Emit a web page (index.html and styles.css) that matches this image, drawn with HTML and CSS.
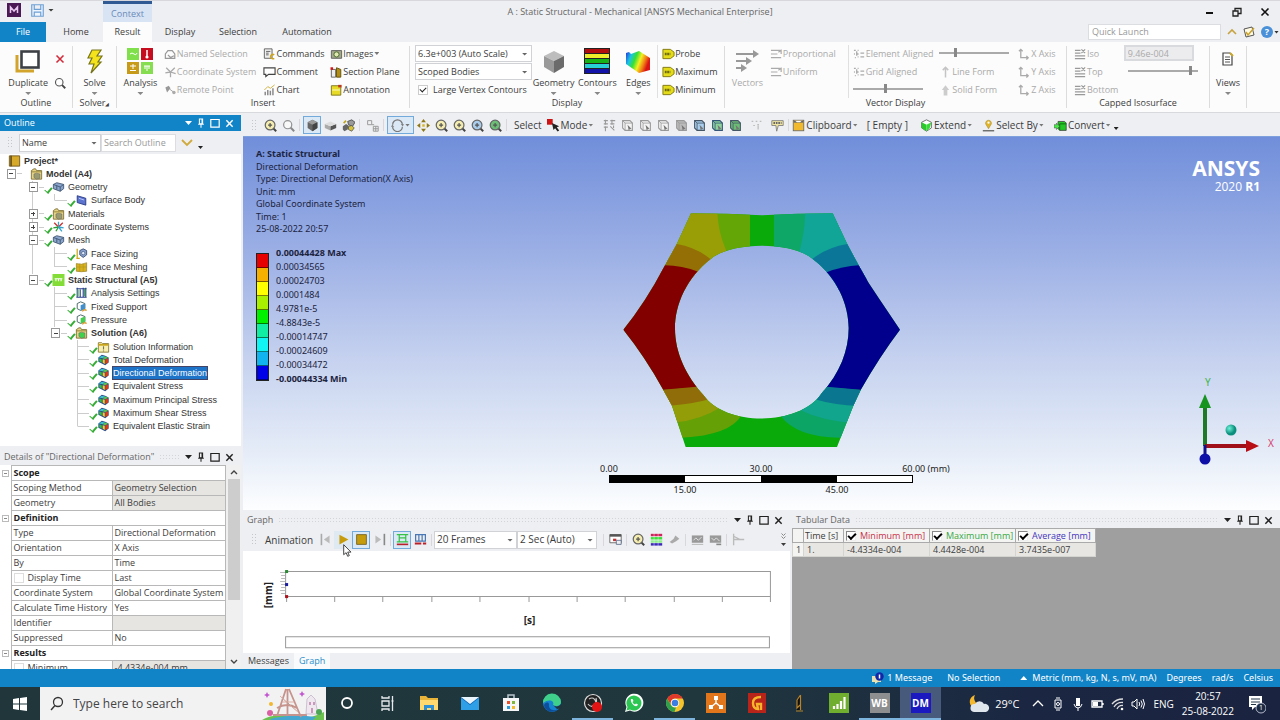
FILE: index.html
```html
<!DOCTYPE html>
<html lang="en">
<head>
<meta charset="utf-8">
<title>A : Static Structural - Mechanical</title>
<link rel="stylesheet" href="styles.css">
</head>
<body>
<svg class="sprite" aria-hidden="true">
  <symbol id="i-mag" viewBox="0 0 16 16"><path d="M10.5 10.5L15 15" stroke="#444" stroke-width="2.4"/><circle cx="7" cy="7" r="5" fill="var(--fill,#fff)" stroke="#555" stroke-width="1.5"/></symbol>
  <symbol id="i-magplus" viewBox="0 0 16 16"><path d="M11 11L15 15" stroke="#444" stroke-width="2.4"/><circle cx="7.500" cy="7.500" r="6" fill="var(--fill,#f5ecb0)" stroke="#666" stroke-width="1.5"/><path d="M5 7.500h5M7.500 5v5" stroke="#555" stroke-width="1.500"/></symbol>
  <symbol id="i-cube" viewBox="0 0 16 16"><path d="M8 1l6 3v7l-6 4-6-4V4z" fill="#666"/><path d="M8 1l6 3-6 3-6-3z" fill="#999"/><path d="M8 7l6-3v7l-6 4z" fill="#444"/></symbol>
  <symbol id="i-slab" viewBox="0 0 16 16"><path d="M1 6l7 3v5l-7-3z" fill="#aaa"/><path d="M15 6L8 9v5l7-3z" fill="#555"/><path d="M8 3l7 3-7 3-7-3z" fill="#ddd"/></symbol>
  <symbol id="i-cyls" viewBox="0 0 16 16"><path d="M1 9l4-3 3 2-1 5-4 2-2-2z" fill="#666"/><path d="M7 3l5-2 4 3-3 5-5-2z" fill="#999" stroke="#444"/><path d="M8 9l4-1 3 3-3 4-4-2z" fill="#d6c238" stroke="#555"/><path d="M2 5l3-3" stroke="#c0a520" stroke-width="2"/></symbol>
  <symbol id="i-boxes" viewBox="0 0 16 16"><path d="M2 2h5v5H2zM7 7h3M9 9h6v6H9zM9 12h6M12 9v6" fill="none" stroke="#999" stroke-width="1.2"/></symbol>
  <symbol id="i-rotate" viewBox="0 0 16 16"><path d="M2 7A6 6 0 0 1 14 7M14 9.500A6 6 0 0 1 2 9.500" fill="none" stroke="#777" stroke-width="1.500"/><path d="M12 6.500h4L14.500 9zM0 9.500h4L1.500 7z" fill="#777"/></symbol>
  <symbol id="i-pan" viewBox="0 0 16 16"><path d="M8 0l3 4H5zM8 16l3-4H5zM0 8l4-3v6zM16 8l-4-3v6z" fill="#8d7716"/><rect x="6.500" y="6.500" width="3" height="3" fill="#d5b62c"/></symbol>
  <symbol id="i-face" viewBox="0 0 16 16"><path d="M2 2h9l3 3v9H5l-3-3z" fill="var(--fill,#f4f4f4)" stroke="var(--line,#999)" stroke-width="1.300"/><path d="M5 5h9M5 5v9M5 5L2 2" fill="none" stroke="var(--line,#999)"/><path d="M8 7l5 5-2 .2L9.500 14z" fill="#777"/></symbol>
  <symbol id="i-dots" viewBox="0 0 16 16"><path d="M1 2h5M3 1v6M9 2h6M11 1v6M1 6h5M9 6h5M1 10h5M3 9v6M9 9l5 5M13 8v3" fill="none" stroke="#999" stroke-width="1.300"/></symbol>
  <symbol id="i-dim" viewBox="0 0 16 16"><path d="M2 3h2M7 3h2M12 3h2M9 7h2M4 8l2 0M10 8v5" stroke="#bbb" stroke-width="1.500" fill="none"/></symbol>
  <symbol id="i-probe" viewBox="0 0 16 16"><path d="M1 2h14v6H9l-2 7-1-7H1z" fill="#efe4a0" stroke="#777"/><path d="M3 5h10" stroke="#666" stroke-width="2.500" stroke-dasharray="2 1"/></symbol>
  <symbol id="i-clip" viewBox="0 0 16 16"><rect x="1.500" y="1.500" width="13" height="13" fill="#f0b92e" stroke="#666"/><path d="M2 3.500h12" stroke="#666" stroke-width="2"/><path d="M4 2l2 2h4l2-2" fill="#fff"/></symbol>
  <symbol id="i-extend" viewBox="0 0 16 16"><path d="M8 1l6 3v7l-6 4-6-4V4z" fill="#fff" stroke="#555"/><path d="M2 4l6 3v8l-6-4z" fill="#2bc92b"/><path d="M8 7l6-3-2 7-4 4z" fill="#37dd37"/></symbol>
  <symbol id="i-selby" viewBox="0 0 16 16"><path d="M8 12L4.500 6a3.600 3.600 0 1 1 7 0z" fill="#e0b528" stroke="#a08020" stroke-width=".6"/><circle cx="8" cy="4.500" r="1.400" fill="#fff"/><path d="M1 14.500h14" stroke="#555" stroke-width="1.500"/></symbol>
  <symbol id="i-convert" viewBox="0 0 16 16"><path d="M5 3h8l2 2v9H7l-2-2z" fill="#24c824" stroke="#444"/><path d="M7 6h8M7 6v8" stroke="#0a5c0a" fill="none"/><path d="M0 7h3V5l4 4-4 4v-2H0z" fill="#4bea4b" stroke="#555" stroke-width=".7"/></symbol>
  <symbol id="i-mode" viewBox="0 0 16 16"><rect x="0" y="0" width="7" height="7" fill="#cc1414"/><path d="M6 5l9 4-3 1 3 4-2 1.500-3-4-2 2z" fill="#222"/></symbol>
  <symbol id="i-pin" viewBox="0 0 10 12"><path d="M3 1h4v6H3zM1.500 7.500h7M5 8v4M6.300 1v6" fill="none" stroke="currentColor" stroke-width="1.300"/></symbol>
  <symbol id="i-x" viewBox="0 0 10 10"><path d="M1.500 1.500l7 7M8.500 1.500l-7 7" stroke="currentColor" stroke-width="1.600"/></symbol>
  <symbol id="i-max" viewBox="0 0 10 10"><path d="M.8 1.500h8.400v7.700H.8z" fill="none" stroke="currentColor" stroke-width="1.200"/></symbol>
  <symbol id="i-folder" viewBox="0 0 14 14"><path d="M1 3l3-2h2l1 2h6v10H1z" fill="#e6d486" stroke="#7a6a30"/><path d="M1 4.500h12" stroke="#8c7a30"/><path d="M7 6l4 1v5l-4 1-3-2V7z" fill="var(--fill,#9a9a70)" stroke="#666" stroke-width=".6"/></symbol>
  <symbol id="i-geo" viewBox="0 0 14 14"><path d="M1 4l4-2 8 2v5l-4 3-8-3z" fill="#8aa4cb" stroke="#3d536f"/><path d="M1 4l8 3 4-3M9 7v5M5 5.500V10" stroke="#3d536f" fill="none"/></symbol>
  <symbol id="i-surf" viewBox="0 0 14 14"><path d="M2 2l10 3v8L2 10z" fill="#5d74cf" stroke="#24337f"/><path d="M4 5l6 2" stroke="#c5d0ff"/></symbol>
  <symbol id="i-csys" viewBox="0 0 14 14"><path d="M7 7L2 2M7 7l5-5" stroke="#d02e2e" stroke-width="1.500"/><path d="M7 7l-6 1M7 7l-3 5" stroke="#2a9c3a" stroke-width="1.500"/><path d="M7 7l6 1M7 7l4 5M7 7V1" stroke="#35a5cc" stroke-width="1.500"/></symbol>
  <symbol id="i-size" viewBox="0 0 14 14"><path d="M2 1v11M1 12h4" stroke="#d0a820" stroke-width="1.500"/><path d="M9 1l4 2v5l-4 3-4-3V3z" fill="#8ba3ce" stroke="#33496e"/><circle cx="9" cy="6" r="2" fill="#dfe8f8" stroke="#33496e" stroke-width=".7"/></symbol>
  <symbol id="i-fmesh" viewBox="0 0 14 14"><path d="M1 3q6 2 12-1v10q-6 1-12 0z" fill="#d6b11d" stroke="#8b7213" stroke-width=".7"/><path d="M5 3v9M9 3v9M1 7h12" stroke="#b3961c" stroke-width=".8"/></symbol>
  <symbol id="i-static" viewBox="0 0 14 14"><rect width="14" height="14" fill="#83dd36"/><path d="M2.500 5.500h9M4 5.500v3M7 5.500v3M10 5.500v3" stroke="#fff" stroke-width="1.300"/></symbol>
  <symbol id="i-anset" viewBox="0 0 14 14"><path d="M1 2h12M1 12h12M2 1v11M5.500 3v9M9 1v11M12 1v11" stroke="#2b3f8b" stroke-width="1.300"/><path d="M3 3v8M10.500 2v9" stroke="#3dae53" stroke-width="1.300"/></symbol>
  <symbol id="i-load" viewBox="0 0 14 14"><path d="M6 1l5 2v6l-5 2-4-2V3z" fill="#fff" stroke="#355"/><path d="M6 5l5-2v6l-5 2z" fill="var(--fill,#3f8fd0)"/><path d="M8 12q2-3 5-1" stroke="#d99a2c" stroke-width="1.500" fill="none"/></symbol>
  <symbol id="i-info" viewBox="0 0 14 14"><path d="M1 2h4l1 1h7v10H1z" fill="#f8eeb0" stroke="#85752d"/><path d="M1 4.500h12" stroke="#c9a51d" stroke-width="2"/><path d="M7 6v4M7 11v1.300" stroke="#775" stroke-width="1.300"/></symbol>
  <symbol id="i-res" viewBox="0 0 14 14"><path d="M5 1l4 1 4 2v6l-4 3-4-2-4-2V4z" fill="#274b8a"/><path d="M1.500 4L5 2l4 1-3 2z" fill="#3bc0d0"/><path d="M9 3l3.500 1.500L9 6 6 5z" fill="#5fc24a"/><path d="M2 5l3 1v4L2 8.500z" fill="#36b845"/><path d="M9 6.500l3.500-1.500v5L9 12z" fill="#d63c1c"/><path d="M6 6l2.500 .7v5L6 10.300z" fill="#e3d32b"/></symbol>
  <symbol id="i-tag" viewBox="0 0 14 12"><path d="M1 1h8l4 3v4l-4 3H1z" fill="#e4dc1a" stroke="#7d7610"/><path d="M3 6h6" stroke="#6d6710" stroke-width="2.500" stroke-dasharray="2 .6"/></symbol>
  <symbol id="i-lines" viewBox="0 0 14 12"><path d="M1 2h11M1 6h7M1 10h11M9 4l3-2v4" fill="none" stroke="#aaa" stroke-width="1.300"/></symbol>
  <symbol id="i-grid" viewBox="0 0 14 12"><path d="M1 2h2M5 2h1M1 6h1M4 6h2M8 5h4M8 9h4M2 10h1M5 9h1M4 3v5" fill="none" stroke="#aaa" stroke-width="1.400"/></symbol>
  <symbol id="i-axis" viewBox="0 0 14 12"><path d="M3 1v9h8M1 3l2-2 2 2M9 8l2 2-2 2" fill="none" stroke="#aaa" stroke-width="1.400"/></symbol>
  <symbol id="i-up" viewBox="0 0 14 12"><path d="M7 12V1M4 4l3-3 3 3" fill="none" stroke="#c4c4c4" stroke-width="1.600"/></symbol>
  <symbol id="i-upsolid" viewBox="0 0 14 12"><path d="M5 12V6H3l4-5 4 5H9v6z" fill="#ccc"/></symbol>
  <symbol id="i-iso" viewBox="0 0 14 12"><path d="M1 2h6M1 5h6M1 8h11M1 11h11M8 5l4-4M8 1l4 4" fill="none" stroke="#999" stroke-width="1.300"/></symbol>
  <symbol id="i-chat" viewBox="0 0 14 12"><path d="M1 1.500h12v7H6L3 11V8.500H1z" fill="#fff" stroke="#444" stroke-width="1.200"/></symbol>
  <symbol id="i-cmd" viewBox="0 0 14 14"><path d="M1 1h9v11H1z" fill="#eee" stroke="#555"/><path d="M3 4h5M3 6h3M3 8h3" stroke="#555"/><path d="M12.500 8a2.500 2.500 0 1 0 0 4" fill="none" stroke="#cda51f" stroke-width="1.800"/></symbol>
  <symbol id="i-chart" viewBox="0 0 14 14"><path d="M2 13V9M5 13V7M8 13V8M11 13V5" stroke="#888" stroke-width="1.700"/><path d="M1 7l4-4 3 2 5-4" fill="none" stroke="#c9a82c"/></symbol>
  <symbol id="i-cam" viewBox="0 0 14 14"><path d="M1 3h12v9H1z" fill="#a3a78c" stroke="#555"/><circle cx="7" cy="7.500" r="3" fill="#dfe9b0" stroke="#3a5c20"/></symbol>
  <symbol id="i-sect" viewBox="0 0 14 14"><path d="M1 4h5v9H1z" fill="#eee" stroke="#555"/><path d="M7 2l5 2v9H7z" fill="#b18d13" stroke="#5a4908"/><path d="M0 3h3" stroke="#d01414" stroke-width="3"/></symbol>
  <symbol id="i-note" viewBox="0 0 14 14"><path d="M1 2h9l2 2v9H1z" fill="#e7db28" stroke="#756e14"/><path d="M2 7h9" stroke="#f7f3a0" stroke-width="1.500"/><path d="M9 1h4v3H9z" fill="#b83a1c"/></symbol>
  <symbol id="i-ns" viewBox="0 0 14 14"><path d="M1 12V7l3-4h5l3 4v5zM4 8l3 3 4-2" fill="none" stroke="#999" stroke-width="1.400"/></symbol>
  <symbol id="i-cs" viewBox="0 0 14 14"><path d="M7 7L2 2M7 7l5-5M7 7l-6 1M7 7v6M7 7l6 2" stroke="#aaa" stroke-width="1.500"/></symbol>
  <symbol id="i-rp" viewBox="0 0 14 14"><path d="M1 4l4-2 2 3-4 5z" fill="#999"/><path d="M6 6l4 3" stroke="#999"/><circle cx="11" cy="10" r="2" fill="#aaa"/></symbol>
</svg>

<div class="app">
  <header class="titlebar">
    <div class="quick">
      <svg class="appicon" viewBox="0 0 14 14"><rect width="14" height="14" fill="#4b1a55"/><path d="M3.500 10V4L7 8l3.500-4v6" fill="none" stroke="#e8c8ee" stroke-width="1.500"/></svg>
      <button class="plain" aria-label="Save"><svg width="13" height="13" viewBox="0 0 12 12"><path d="M.7.700h10.600v10.600H.7zM3 1v4h6V1M3 11V7.500h6V11" fill="#eef5ff" stroke="#6fa0d4" stroke-width="1.100"/></svg></button>
      <i class="caret"></i>
      <span class="context">Context</span>
    </div>
    <h1>A : Static Structural - Mechanical [ANSYS Mechanical Enterprise]</h1>
    <div class="winbtns">
      <button class="plain" aria-label="Minimize"><svg width="9" height="10"><path d="M1 6h7" stroke="#111" stroke-width="2"/></svg></button>
      <button class="plain" aria-label="Restore"><svg width="10" height="10"><path d="M1 4h5v5H1zM3 3.500V1.500h6v5H6.500" fill="none" stroke="#222" stroke-width="1.300"/></svg></button>
      <button class="plain" aria-label="Close"><svg width="10" height="10"><use href="#i-x"/></svg></button>
    </div>
  </header>

  <nav class="tabs">
    <button class="tab file">File</button>
    <button class="tab home">Home</button>
    <button class="tab on">Result</button>
    <button class="tab disp">Display</button>
    <button class="tab sel">Selection</button>
    <button class="tab auto">Automation</button>
    <div class="launch">
      <input type="text" placeholder="Quick Launch" aria-label="Quick Launch">
      <svg width="10" height="8"><path d="M1 6l4-4 4 4" fill="none" stroke="#c7a340" stroke-width="1.600"/></svg>
      <svg width="12" height="12"><path d="M1 3l8-2 2 8-8 2z" fill="#fffbe6" stroke="#555"/><path d="M3 6l2 3 6-7" fill="none" stroke="#c9a22e" stroke-width="1.500"/></svg>
      <span class="help"><b>?</b></span><i class="caret tight"></i>
    </div>
  </nav>

  <section class="ribbon">
    <div class="group">
      <div class="body b-outline">
        <button class="big"><svg width="26" height="26" viewBox="0 0 26 26"><path d="M2 7v16h17" fill="none" stroke="#d2a42c" stroke-width="3"/><rect x="6.500" y="3.500" width="17" height="16" fill="#fff" stroke="#3d4045" stroke-width="2.600"/></svg><span>Duplicate</span><i class="caret dim"></i></button>
        <div class="side"><button class="plain" aria-label="Delete"><svg class="red" width="10" height="10"><use href="#i-x"/></svg></button><button class="plain" aria-label="Find"><svg width="12" height="12"><use href="#i-mag"/></svg></button></div>
      </div>
      <h2>Outline</h2>
    </div>
    <div class="group">
      <div class="body b-one"><button class="big"><svg width="24" height="26" viewBox="0 0 24 26"><path d="M9 2h9l-4 6h5l-4 6h3L8 25l3-9H6l3-6H5z" fill="#f3e21c" stroke="#77751c" stroke-width="1.200"/></svg><span>Solve</span><i class="caret dim"></i></button></div>
      <h2>Solver<small>◢</small></h2>
    </div>
    <div class="group">
      <div class="body b-insert">
        <button class="big"><svg width="26" height="26" viewBox="0 0 26 26"><path d="M0 0h12v12H0z" fill="#7fe04c"/><path d="M14 0h12v12H14z" fill="#c60d20"/><path d="M0 14h12v12H0z" fill="#c79a17"/><path d="M14 14h12v12H14z" fill="#86dd4f"/><path d="M3 6q2-2 4 0t3-1M3 18h6M6 16v5M3 22.500h6M17 18h6M18 18v3M22 18v3M20 18v5" fill="none" stroke="#fff"/><path d="M20 2v7" stroke="#fff" stroke-width="1.500"/><circle cx="20" cy="9" r="1.600" fill="#fff"/></svg><span>Analysis</span><i class="caret dim"></i></button>
        <div class="col off">
          <button class="item" disabled><svg><use href="#i-ns"/></svg>Named Selection</button>
          <button class="item" disabled><svg><use href="#i-cs"/></svg>Coordinate System</button>
          <button class="item" disabled><svg><use href="#i-rp"/></svg>Remote Point</button>
        </div>
        <div class="col">
          <button class="item"><svg><use href="#i-cmd"/></svg>Commands</button>
          <button class="item"><svg><use href="#i-chat"/></svg>Comment</button>
          <button class="item"><svg><use href="#i-chart"/></svg>Chart</button>
        </div>
        <div class="col">
          <button class="item"><svg><use href="#i-cam"/></svg>Images<i class="caret tight"></i></button>
          <button class="item"><svg><use href="#i-sect"/></svg>Section Plane</button>
          <button class="item"><svg><use href="#i-note"/></svg>Annotation</button>
        </div>
      </div>
      <h2>Insert</h2>
    </div>
    <div class="group">
      <div class="body b-display">
        <div class="col combos">
          <label class="combo"><select aria-label="Scale"><option>6.3e+003 (Auto Scale)</option></select></label>
          <label class="combo"><select aria-label="Bodies"><option>Scoped Bodies</option></select></label>
          <label class="tick"><input type="checkbox" checked>Large Vertex Contours</label>
        </div>
        <button class="big"><svg width="24" height="26" viewBox="0 0 24 26"><path d="M12 3l10 5-10 5L2 8z" fill="#bdbdbd"/><path d="M2 8l10 5v12L2 19z" fill="#999"/><path d="M22 8l-10 5v12l10-6z" fill="#6b6b6b"/></svg><span>Geometry</span><i class="caret dim"></i></button>
        <button class="big"><svg width="26" height="26" viewBox="0 0 26 26"><path d="M0 0h26v26H0z" fill="#222"/><path d="M1 1h24v4H1z" fill="#b30d0d"/><path d="M1 6h24v4H1z" fill="#f0ee2a"/><path d="M1 11h24v4H1z" fill="#16b216"/><path d="M1 16h24v4H1z" fill="#27cfd6"/><path d="M1 21h24v4H1z" fill="#1212a8"/></svg><span>Contours</span><i class="caret dim"></i></button>
        <button class="big"><svg width="26" height="26" viewBox="0 0 26 26"><defs><linearGradient id="rb" x1="0" y1="0" x2="1" y2=".35"><stop offset="0" stop-color="#2a2ad8"/><stop offset=".25" stop-color="#19c4e8"/><stop offset=".45" stop-color="#35e035"/><stop offset=".65" stop-color="#f2f020"/><stop offset=".85" stop-color="#f07a14"/><stop offset="1" stop-color="#d81414"/></linearGradient></defs><path d="M1 5l3-1 2 2 8-3 11 7v12l-11 3L1 16z" fill="url(#rb)"/></svg><span>Edges</span><i class="caret dim"></i></button>
        <div class="col ruled">
          <button class="item"><svg><use href="#i-tag"/></svg>Probe</button>
          <button class="item"><svg><use href="#i-tag"/></svg>Maximum</button>
          <button class="item"><svg><use href="#i-tag"/></svg>Minimum</button>
        </div>
      </div>
      <h2>Display</h2>
    </div>
    <div class="group">
      <div class="body b-vector off">
        <button class="big" disabled><svg width="26" height="26" viewBox="0 0 26 26"><path d="M2 6h18M2 13h10M2 20h5" stroke="#999" stroke-width="2"/><path d="M19 2l6 4-6 4zM12 9l6 4-6 4zM7 16l6 4-6 4z" fill="#999"/></svg><span>Vectors</span></button>
        <div class="col">
          <button class="item" disabled><svg><use href="#i-lines"/></svg>Proportional</button>
          <button class="item" disabled><svg><use href="#i-lines"/></svg>Uniform</button>
        </div>
        <div class="col ruled">
          <button class="item" disabled><svg><use href="#i-grid"/></svg>Element Aligned</button>
          <button class="item" disabled><svg><use href="#i-grid"/></svg>Grid Aligned</button>
          <input type="range" aria-label="Grid density" value="47">
        </div>
        <div class="col">
          <input type="range" aria-label="Vector length" value="22">
          <button class="item" disabled><svg><use href="#i-up"/></svg>Line Form</button>
          <button class="item" disabled><svg><use href="#i-upsolid"/></svg>Solid Form</button>
        </div>
        <div class="col">
          <button class="item" disabled><svg><use href="#i-axis"/></svg>X Axis</button>
          <button class="item" disabled><svg><use href="#i-axis"/></svg>Y Axis</button>
          <button class="item" disabled><svg><use href="#i-axis"/></svg>Z Axis</button>
        </div>
      </div>
      <h2>Vector Display</h2>
    </div>
    <div class="group">
      <div class="body b-iso off">
        <div class="col">
          <button class="item" disabled><svg><use href="#i-iso"/></svg>Iso</button>
          <button class="item" disabled><svg><use href="#i-iso"/></svg>Top</button>
          <button class="item" disabled><svg><use href="#i-iso"/></svg>Bottom</button>
        </div>
        <div class="col">
          <input class="isoval" type="text" value="9.46e-004" aria-label="Iso value" disabled>
          <input type="range" aria-label="Iso level" value="92">
        </div>
      </div>
      <h2>Capped Isosurface</h2>
    </div>
    <div class="group">
      <div class="body b-one"><button class="big views"><svg width="14" height="14" viewBox="0 0 14 14"><path d="M2 1h7l2 2v10H2z" fill="#fff" stroke="#444" stroke-width="1.200"/><path d="M4 5h5M4 7.500h5M4 10h5" stroke="#555"/><path d="M9 1l3 3" stroke="#c9a82c" stroke-width="2"/></svg><span>Views</span><i class="caret dim"></i></button></div>
    </div>
    <div></div>
  </section>

  <main class="work">
    <div class="left">
      <section class="outline">
        <header class="phead blue"><h3>Outline</h3><span class="grow"></span><span class="pbtns"><button class="plain" aria-label="Menu"><i class="caret wide"></i></button><button class="plain" aria-label="Pin"><svg width="8" height="10"><use href="#i-pin"/></svg></button><button class="plain" aria-label="Maximize"><svg width="10" height="10"><use href="#i-max"/></svg></button><button class="plain" aria-label="Close"><svg width="9" height="9"><use href="#i-x"/></svg></button></span></header>
        <div class="filter">
          <i class="grip"></i>
          <label class="combo name"><select aria-label="Filter by"><option>Name</option></select></label>
          <input class="search" type="text" placeholder="Search Outline" aria-label="Search Outline">
          <svg width="12" height="8"><path d="M1 1l5 5 5-5" fill="none" stroke="#d0aa3c" stroke-width="1.800"/></svg>
          <i class="caret low"></i>
        </div>
        <ul class="tree">
          <li class="b"><span class="ic p"><svg viewBox="0 0 14 14"><path d="M1 1h12v12H1z" fill="#d6a92a" stroke="#6b531a"/><path d="M3 1v12" stroke="#6b531a" stroke-width="2"/></svg></span>Project*</li>
          <li class="b"><i class="c x"></i><span class="ic"><svg><use href="#i-folder"/></svg></span>Model (A4)</li>
          <li><i class="c"></i><i class="c x v"></i><span class="ic k"><svg><use href="#i-geo"/></svg></span>Geometry</li>
          <li><i class="c"></i><i class="c v"></i><i class="c l"></i><span class="ic k"><svg><use href="#i-surf"/></svg></span>Surface Body</li>
          <li><i class="c"></i><i class="c x plus v"></i><span class="ic k"><svg><use href="#i-folder"/></svg></span>Materials</li>
          <li><i class="c"></i><i class="c x plus v"></i><span class="ic k"><svg><use href="#i-csys"/></svg></span>Coordinate Systems</li>
          <li><i class="c"></i><i class="c x v"></i><span class="ic k"><svg><use href="#i-geo"/></svg></span>Mesh</li>
          <li><i class="c"></i><i class="c v"></i><i class="c h v"></i><span class="ic k"><svg><use href="#i-size"/></svg></span>Face Sizing</li>
          <li><i class="c"></i><i class="c v"></i><i class="c l"></i><span class="ic k"><svg><use href="#i-fmesh"/></svg></span>Face Meshing</li>
          <li class="b"><i class="c"></i><i class="c x"></i><span class="ic k"><svg><use href="#i-static"/></svg></span>Static Structural (A5)</li>
          <li><i class="c"></i><i class="c"></i><i class="c h v"></i><span class="ic k"><svg><use href="#i-anset"/></svg></span>Analysis Settings</li>
          <li><i class="c"></i><i class="c"></i><i class="c h v"></i><span class="ic k"><svg><use href="#i-load"/></svg></span>Fixed Support</li>
          <li><i class="c"></i><i class="c"></i><i class="c h v"></i><span class="ic k green"><svg><use href="#i-load"/></svg></span>Pressure</li>
          <li class="b"><i class="c"></i><i class="c"></i><i class="c x"></i><span class="ic k green"><svg><use href="#i-folder"/></svg></span>Solution (A6)</li>
          <li><i class="c"></i><i class="c"></i><i class="c"></i><i class="c h v"></i><span class="ic k"><svg><use href="#i-info"/></svg></span>Solution Information</li>
          <li><i class="c"></i><i class="c"></i><i class="c"></i><i class="c h v"></i><span class="ic k"><svg><use href="#i-res"/></svg></span>Total Deformation</li>
          <li><i class="c"></i><i class="c"></i><i class="c"></i><i class="c h v"></i><span class="ic k"><svg><use href="#i-res"/></svg></span><mark>Directional Deformation</mark></li>
          <li><i class="c"></i><i class="c"></i><i class="c"></i><i class="c h v"></i><span class="ic k"><svg><use href="#i-res"/></svg></span>Equivalent Stress</li>
          <li><i class="c"></i><i class="c"></i><i class="c"></i><i class="c h v"></i><span class="ic k"><svg><use href="#i-res"/></svg></span>Maximum Principal Stress</li>
          <li><i class="c"></i><i class="c"></i><i class="c"></i><i class="c h v"></i><span class="ic k"><svg><use href="#i-res"/></svg></span>Maximum Shear Stress</li>
          <li><i class="c"></i><i class="c"></i><i class="c"></i><i class="c l"></i><span class="ic k"><svg><use href="#i-res"/></svg></span>Equivalent Elastic Strain</li>
        </ul>
      </section>
      <section class="details">
        <header class="phead"><h3>Details of "Directional Deformation"</h3><span class="grow tex"></span><span class="pbtns"><button class="plain" aria-label="Menu"><i class="caret wide"></i></button><button class="plain" aria-label="Pin"><svg width="8" height="10"><use href="#i-pin"/></svg></button><button class="plain" aria-label="Maximize"><svg width="10" height="10"><use href="#i-max"/></svg></button><button class="plain" aria-label="Close"><svg width="9" height="9"><use href="#i-x"/></svg></button></span></header>
        <div class="props">
          <table>
            <colgroup><col class="gut"><col class="key"><col></colgroup>
            <tr class="sec"><td><i class="exp"></i></td><th colspan="2">Scope</th></tr>
            <tr><td></td><td>Scoping Method</td><td class="ro">Geometry Selection</td></tr>
            <tr><td></td><td>Geometry</td><td class="ro">All Bodies</td></tr>
            <tr class="sec"><td><i class="exp"></i></td><th colspan="2">Definition</th></tr>
            <tr><td></td><td>Type</td><td>Directional Deformation</td></tr>
            <tr><td></td><td>Orientation</td><td>X Axis</td></tr>
            <tr><td></td><td>By</td><td>Time</td></tr>
            <tr><td></td><td><label><input type="checkbox">Display Time</label></td><td>Last</td></tr>
            <tr><td></td><td>Coordinate System</td><td>Global Coordinate System</td></tr>
            <tr><td></td><td>Calculate Time History</td><td>Yes</td></tr>
            <tr><td></td><td>Identifier</td><td class="ro"></td></tr>
            <tr><td></td><td>Suppressed</td><td>No</td></tr>
            <tr class="sec"><td><i class="exp"></i></td><th colspan="2">Results</th></tr>
            <tr><td></td><td><label><input type="checkbox">Minimum</label></td><td class="ro">-4.4334e-004 mm</td></tr>
          </table>
          <div class="scroll"><svg width="8" height="6"><path d="M1 5l3-3 3 3" fill="none" stroke="#444" stroke-width="1.400"/></svg><i></i><svg width="8" height="6"><path d="M1 1l3 3 3-3" fill="none" stroke="#444" stroke-width="1.400"/></svg></div>
        </div>
      </section>
    </div>

    <div class="right">
      <div class="toolbar">
        <i class="grip"></i>
        <button class="tb"><svg><use href="#i-magplus"/></svg></button>
        <button class="tb faded"><svg><use href="#i-mag"/></svg></button>
        <i class="sep"></i>
        <button class="tb act"><svg><use href="#i-cube"/></svg></button>
        <button class="tb"><svg><use href="#i-slab"/></svg></button>
        <button class="tb"><svg><use href="#i-cyls"/></svg></button>
        <i class="sep"></i>
        <button class="tb"><svg><use href="#i-boxes"/></svg></button>
        <i class="sep"></i>
        <button class="tb act rot"><svg><use href="#i-rotate"/></svg><i class="caret tight"></i></button>
        <button class="tb"><svg><use href="#i-pan"/></svg></button>
        <button class="tb"><svg><use href="#i-magplus"/></svg></button>
        <button class="tb"><svg><use href="#i-magplus"/></svg></button>
        <button class="tb bl"><svg><use href="#i-magplus"/></svg></button>
        <button class="tb gr"><svg><use href="#i-magplus"/></svg></button>
        <i class="sep"></i>
        <span class="lbl">Select</span>
        <button class="tbt mode"><svg><use href="#i-mode"/></svg>Mode<i class="caret tight"></i></button>
        <button class="tb"><svg><use href="#i-dots"/></svg></button>
        <button class="tb"><svg><use href="#i-face"/></svg></button>
        <button class="tb"><svg><use href="#i-face"/></svg></button>
        <button class="tb"><svg><use href="#i-face"/></svg></button>
        <button class="tb gy"><svg><use href="#i-face"/></svg></button>
        <button class="tb bl"><svg><use href="#i-face"/></svg></button>
        <button class="tb bg"><svg><use href="#i-face"/></svg></button>
        <button class="tb gr"><svg><use href="#i-face"/></svg></button>
        <button class="tb wider"><svg><use href="#i-dim"/></svg></button>
        <button class="tb"><svg><use href="#i-probe"/></svg></button>
        <i class="sep"></i>
        <button class="tbt clip"><svg><use href="#i-clip"/></svg>Clipboard<i class="caret tight"></i></button>
        <span class="lbl empty">[ Empty ]</span>
        <button class="tbt ext"><svg><use href="#i-extend"/></svg>Extend<i class="caret tight"></i></button>
        <button class="tbt sby"><svg><use href="#i-selby"/></svg>Select By<i class="caret tight"></i></button>
        <button class="tbt con"><svg><use href="#i-convert"/></svg>Convert<i class="caret tight"></i></button>
        <i class="caret low"></i>
      </div>

      <section class="viewport">
        <div class="notes">
          <p><b>A: Static Structural</b></p><p>Directional Deformation</p><p>Type: Directional Deformation(X Axis)</p><p>Unit: mm</p><p>Global Coordinate System</p><p>Time: 1</p><p>25-08-2022 20:57</p>
        </div>
        <div class="legend">
          <div class="swatches"><i class="s1"></i><i class="s2"></i><i class="s3"></i><i class="s4"></i><i class="s5"></i><i class="s6"></i><i class="s7"></i><i class="s8"></i><i class="s9"></i></div>
          <ol><li><b>0.00044428 Max</b></li><li>0.00034565</li><li>0.00024703</li><li>0.0001484</li><li>4.9781e-5</li><li>-4.8843e-5</li><li>-0.00014747</li><li>-0.00024609</li><li>-0.00034472</li><li><b>-0.00044334 Min</b></li></ol>
        </div>
        <svg class="scene" viewBox="562 200 400 300" width="400" height="300">
          <defs><clipPath id="ring"><path clip-rule="evenodd" d="M273 70Q380 70 485 76Q590 70 698 70L742 163L776 226Q805 282 840 330L900 419Q840 498 782 600L760 647L711 771H257L216 647L190 600Q135 500 70 419Q135 340 195 226L230 163ZM225 415C225 345 260 262 332 207C395 154 576 154 638 207C712 262 746 345 746 415C746 480 720 550 665 610C600 710 375 710 310 615C260 560 225 490 225 415Z"/></clipPath></defs>
          <g transform="translate(600 190) scale(.33333)"><g clip-path="url(#ring)">
            <path d="M0 0h1000v800H0z" fill="#0aaa0a"/>
            <path d="M200 60H450V260H200z" fill="#65a607"/>
            <path d="M200 60H352Q352 120 378 180V300H200z" fill="#999e06"/>
            <path d="M522 60H800V300H522z" fill="#0fa768"/>
            <path d="M622 60H800V300H580V240Q615 150 616 60z" fill="#10a597"/>
            <path d="M180 162H230Q290 172 332 208V300H180z" fill="#946f06"/>
            <path d="M800 162H742Q680 172 636 208V300H800z" fill="#0b7698"/>
            <path d="M50 226H195Q245 226 297 246V592L190 600H50z" fill="#820000"/>
            <path d="M920 226H776Q730 228 676 248V592L782 600H920z" fill="#00008c"/>
            <path d="M190 743H245Q390 736 425 675L330 600H180z" fill="#65a007"/>
            <path d="M200 697H228Q300 690 365 650L300 600H190z" fill="#939d08"/>
            <path d="M180 600L290 590L330 627Q280 642 200 648z" fill="#906d08"/>
            <path d="M770 743H720Q590 742 542 678L650 600H800z" fill="#0ca565"/>
            <path d="M770 699Q670 695 600 660L660 600H800z" fill="#10a58c"/>
            <path d="M790 600L680 590L640 626Q700 645 780 648z" fill="#0b7690"/>
          </g></g>
          <rect x="609.500" y="475.500" width="303" height="7" fill="#fff" stroke="#000"/>
          <path d="M609 475h76v8h-76zM761 475h76v8h-76z"/>
          <g class="rule"><text x="609" y="472">0.00</text><text x="761" y="472">30.00</text><text x="926" y="472">60.00 (mm)</text><text x="685" y="493">15.00</text><text x="837" y="493">45.00</text></g>
        </svg>
        <div class="brand"><b>ANSYS</b><span>2020 <b>R1</b></span></div>
        <svg class="triad" width="80" height="100" viewBox="0 0 80 100">
          <defs><radialGradient id="ball" cx=".35" cy=".35"><stop offset="0" stop-color="#6ff2da"/><stop offset="1" stop-color="#0b8f7c"/></radialGradient></defs>
          <text x="9" y="14" fill="#3fb54a">Y</text><text x="72" y="75" fill="#d8406c">X</text>
          <path d="M9 74V34" stroke="#1f7a25" stroke-width="4"/><path d="M9 22l6 14H3z" fill="#159420"/>
          <path d="M9 74h44" stroke="#a01018" stroke-width="4"/><path d="M63 74l-13-6v12z" fill="#b80f16"/>
          <path d="M9 73v12" stroke="#10108c" stroke-width="3"/><circle cx="9" cy="87" r="5.500" fill="#0d0da8"/>
          <circle cx="35" cy="58" r="5.500" fill="url(#ball)"/>
        </svg>
      </section>

      <div class="bottom">
        <section class="graph">
          <header class="phead"><h3>Graph</h3><span class="grow tex"></span><span class="pbtns"><button class="plain" aria-label="Menu"><i class="caret wide"></i></button><button class="plain" aria-label="Pin"><svg width="8" height="10"><use href="#i-pin"/></svg></button><button class="plain" aria-label="Maximize"><svg width="10" height="10"><use href="#i-max"/></svg></button><button class="plain" aria-label="Close"><svg width="9" height="9"><use href="#i-x"/></svg></button></span></header>
          <div class="anim">
            <i class="grip"></i>
            <span class="lbl">Animation</span>
            <button class="tb" aria-label="First"><svg viewBox="0 0 16 16"><path d="M3 1v14" stroke="#aaa" stroke-width="2"/><path d="M13 3v10L6 8z" fill="#bbb"/></svg></button>
            <button class="tb play" aria-label="Play"><svg viewBox="0 0 16 16"><path d="M3 2l11 6-11 6z" fill="#c79c0c"/></svg></button>
            <button class="tb act" aria-label="Stop"><svg viewBox="0 0 16 16"><path d="M2 2h12v12H2z" fill="#c79c0c" stroke="#6b5a1c"/></svg></button>
            <button class="tb" aria-label="Last"><svg viewBox="0 0 16 16"><path d="M14 1v14" stroke="#888" stroke-width="2"/><path d="M3 3v10l7-5z" fill="#bbb"/></svg></button>
            <i class="sep"></i>
            <button class="tb act"><svg viewBox="0 0 16 16"><path d="M1 2h14M1 11h14M4 2v9M12 2v9M4 6h8" stroke="#36c247" stroke-width="1.500"/><path d="M1 14h14" stroke="#b8202a" stroke-width="2"/></svg></button>
            <button class="tb"><svg viewBox="0 0 16 16"><path d="M2 2h12v8H2zM6 2v8M10 2v8" fill="none" stroke="#4a78b4" stroke-width="1.500"/><path d="M1 13h8M11 13h4" stroke="#b8202a" stroke-width="2.500"/></svg></button>
            <i class="sep"></i>
            <label class="combo frames"><select aria-label="Frames"><option>20 Frames</option></select></label>
            <label class="combo secs"><select aria-label="Duration"><option>2 Sec (Auto)</option></select></label>
            <i class="sep"></i>
            <button class="tb"><svg viewBox="0 0 16 16"><path d="M1 2h14v10H1z" fill="#fff" stroke="#555"/><path d="M1 3h14" stroke="#555" stroke-width="3"/><path d="M5 7h4v3H5z" fill="#c23636"/><path d="M9 9h6v5H9z" fill="#eee" stroke="#568"/></svg></button>
            <i class="sep"></i>
            <button class="tb"><svg><use href="#i-magplus"/></svg></button>
            <button class="tb"><svg viewBox="0 0 16 16"><path d="M1 2.500h14" stroke="#d0245c" stroke-width="3"/><path d="M1 6.500h14" stroke="#39e03b" stroke-width="3"/><path d="M1 10.500h14" stroke="#8df08b" stroke-width="3"/><path d="M1 14h14" stroke="#3c2ab8" stroke-width="3"/><path d="M5 0v16M10 0v16" stroke="#fff" stroke-width=".5"/></svg></button>
            <button class="tb"><svg viewBox="0 0 16 16"><path d="M2 11l5-4 2-4 5 4-4 3-5 3z" fill="#aaa"/></svg></button>
            <i class="sep"></i>
            <button class="tb"><svg viewBox="0 0 16 16"><path d="M1 3h14v9H1z" fill="#999"/><path d="M3 9l3-3 3 3 4-4" stroke="#eee" fill="none"/><path d="M1 14h14" stroke="#aaa"/></svg></button>
            <button class="tb"><svg viewBox="0 0 16 16"><path d="M1 3h14v9H1z" fill="#999"/><path d="M3 6l3 3 3-3 4 4" stroke="#eee" fill="none"/><path d="M9 14h6" stroke="#888" stroke-width="2"/></svg></button>
            <i class="sep"></i>
            <button class="tb"><svg viewBox="0 0 16 16"><path d="M2 1v14M2 4l8 4H2M9 8h6" fill="none" stroke="#bbb" stroke-width="1.700"/></svg></button>
            <span class="more"><svg width="5" height="6"><path d="M.5.500l2 2 2-2M.5 3.500l2 2 2-2" fill="none" stroke="#888"/></svg><i class="caret"></i></span>
          </div>
          <svg class="plot" viewBox="0 0 546 102">
            <text class="axis" transform="translate(29 44) rotate(-90)" x="0" y="0">[mm]</text>
            <path d="M42.500 20.500h484v25H42.500zM42.500 85.500h483v11H42.500z" fill="#fff" stroke="#999"/>
            <path d="M43.500 46v5M91.500 46v5M139.500 46v5M188.500 46v5M236.500 46v5M285.500 46v5M333.500 46v5M381.500 46v5M430.500 46v5M478.500 46v5M526.500 46v5" stroke="#999"/>
            <path d="M37 21.500h5M38 24.500h4M38 27.500h4M37 30.500h5M38 33.500h4M38 36.500h4M37 39.500h5M38 42.500h4" stroke="#bbb"/>
            <path d="M42 19h3v3h-3z" fill="#2c8a35"/><path d="M42 32h3v3h-3z" fill="#1b1ba0"/><path d="M42 44h3v3h-3z" fill="#b0101a"/>
            <text class="axis" x="286" y="73">[s]</text>
          </svg>
          <div class="ptabs"><button class="plain">Messages</button><button class="plain cur">Graph</button></div>
          <svg class="cursor" width="9" height="13" viewBox="0 0 9 13"><path d="M.7.700v10l2.400-2 1.600 3.600 1.600-.7-1.600-3.500h3.300z" fill="#fff" stroke="#333" stroke-width=".9"/></svg>
        </section>
        <section class="tabular">
          <header class="phead"><h3>Tabular Data</h3><span class="grow tex"></span><span class="pbtns"><button class="plain" aria-label="Menu"><i class="caret wide"></i></button><button class="plain" aria-label="Pin"><svg width="8" height="10"><use href="#i-pin"/></svg></button><button class="plain" aria-label="Maximize"><svg width="10" height="10"><use href="#i-max"/></svg></button><button class="plain" aria-label="Close"><svg width="9" height="9"><use href="#i-x"/></svg></button></span></header>
          <div class="gridwrap">
            <table class="data">
              <tr><th class="n"></th><th class="t">Time [s]</th><th class="m cr"><label><input type="checkbox" checked>Minimum [mm]</label></th><th class="m cg"><label><input type="checkbox" checked>Maximum [mm]</label></th><th class="a cb"><label><input type="checkbox" checked>Average [mm]</label></th></tr>
              <tr><td class="n">1</td><td>1.</td><td>-4.4334e-004</td><td>4.4428e-004</td><td>3.7435e-007</td></tr>
            </table>
          </div>
        </section>
      </div>
    </div>
  </main>

  <footer class="status">
    <span class="msg"><svg width="12" height="12" viewBox="0 0 12 12"><path d="M0 4h9v6H6l-3 2v-2H0z" fill="#e9e2b0"/><circle cx="7.500" cy="4.500" r="4.200" fill="#1226a8"/><path d="M7.500 2.500v4" stroke="#fff" stroke-width="1.500"/></svg>1 Message</span>
    <span class="nosel">No Selection</span>
    <span class="units"><i class="caret upw"></i>Metric (mm, kg, N, s, mV, mA)</span>
    <span>Degrees</span><span>rad/s</span><span>Celsius</span>
  </footer>

  <footer class="taskbar">
    <button class="start" aria-label="Start"><svg width="14" height="14"><path d="M0 2l6-1v5.500H0zM7 1l7-1v6.500H7zM0 7.500h6V13l-6-1zM7 7.500h7V14l-7-1z" fill="#fff"/></svg></button>
    <label class="find">
      <svg width="14" height="15" viewBox="0 0 14 15"><circle cx="8" cy="6" r="4.500" fill="none" stroke="#333" stroke-width="1.300"/><path d="M5 9.500L1 14" stroke="#333" stroke-width="1.400"/></svg>
      <input type="text" placeholder="Type here to search" aria-label="Search">
      <svg class="art" width="62" height="32" viewBox="0 0 62 32"><path d="M0 32q12-7 28-3t34-5v8z" fill="#6cc24e"/><path d="M8 31q22-6 46-2l-3 3H9z" fill="#45a7cf"/><path d="M24 1l-9 27M27 1l12 28M25.500 1v27M15 20q10-6 20 0M11 27h34" fill="none" stroke="#c6948c" stroke-width="1.800"/><path d="M20 14h12M18 8q8 8 18 16" stroke="#ddb0a5"/><path d="M44 26l1-15 4-4 4 4 3 15z" fill="#efe8ef" stroke="#c3b5c8" stroke-width=".8"/><path d="M47 14h2v3h-2zM51 14h2v3h-2zM49 20h2v5h-2z" fill="#c998bb"/><path d="M5 4l1 2 2 1-2 1-1 2-1-2-2-1 2-1zM40 3l1 2 2 1-2 1-1 2-1-2-2-1 2-1z" fill="#c258cf"/><circle cx="9" cy="16" r="2" fill="#f3b62d"/><circle cx="8" cy="25" r="3" fill="#db5fa3"/><circle cx="57" cy="24" r="3" fill="#4da554"/></svg>
    </label>
    <div class="apps">
      <button aria-label="Cortana"><svg viewBox="0 0 20 20"><circle cx="10" cy="10" r="5" fill="none" stroke="#fff" stroke-width="1.800"/></svg></button>
      <button aria-label="Task view"><svg viewBox="0 0 20 20"><path d="M4 8h7v5H4zM4 3v2h7V3M4 18v-2h7v2M14.500 3v15M13.500 8h2" fill="none" stroke="#e8ecee" stroke-width="1.300"/></svg></button>
      <button aria-label="Files"><svg viewBox="0 0 20 20"><path d="M1 3h6l2 2h10v12H1z" fill="#e8b53a"/><path d="M1 7h18v10H1z" fill="#ffd970"/><path d="M5 17v-5h10v5h-3v-2H8v2z" fill="#2d8fd5"/></svg></button>
      <button aria-label="Mail"><svg viewBox="0 0 20 20"><path d="M1 4h18v13H1z" fill="#0f67b8"/><path d="M1 4h18l-9 7z" fill="#e9f4fc"/><path d="M1 5l9 7 9-7v12H1z" fill="#2f9fe8"/></svg></button>
      <button aria-label="Store"><svg viewBox="0 0 20 20"><path d="M2 5h16v13H2z" fill="#f4f6f8"/><path d="M7 5V2h6v3" fill="none" stroke="#b9c4cc" stroke-width="1.500"/><path d="M6 8h3v3H6z" fill="#e8502a"/><path d="M11 8h3v3h-3z" fill="#7db83a"/><path d="M6 13h3v3H6z" fill="#2f9ad8"/><path d="M11 13h3v3h-3z" fill="#f1b92c"/></svg></button>
      <button aria-label="Edge"><svg viewBox="0 0 20 20"><circle cx="10" cy="10" r="9" fill="#1683d0"/><path d="M1 10a9 9 0 0 1 18-1c0 4-5 5-8 3 2-4-4-7-10-2z" fill="#3fd08c"/><path d="M7 11c-1 5 4 8 9 5-4 5-13 3-14-4 2-3 4-3 5-1z" fill="#0d4f9c"/><path d="M11 12c2 2 6 2 8-1l1 4-5 1z" fill="#1f343c"/></svg></button>
      <button class="run" aria-label="Recorder"><svg viewBox="0 0 20 20"><circle cx="10" cy="10" r="8.500" fill="#222" stroke="#ddd" stroke-width="1.200"/><path d="M6 6q5-3 7 3M13 5q2 6-4 8M5 11q3 4 7 1" fill="none" stroke="#ccc" stroke-width="1.200"/><circle cx="14" cy="14" r="5" fill="#e31414"/></svg></button>
      <button aria-label="WhatsApp"><svg viewBox="0 0 20 20"><path d="M1 19l1.500-5A9 9 0 1 1 6 17.500z" fill="#fff"/><path d="M2.500 17.500L3.500 14A7.500 7.500 0 1 1 6 16.500z" fill="#2cc653"/><path d="M7 6c-1 3 3 8 6 7l1-1.500-2-1-1 1C9.500 11 9 10 8.500 9l1-1L8.500 6z" fill="#fff"/></svg></button>
      <button class="run" aria-label="Chrome"><svg viewBox="0 0 20 20"><circle cx="10" cy="10" r="9" fill="#f5c32c"/><path d="M2.200 5.500A9 9 0 0 1 17.800 5.500H10a4.500 4.500 0 0 0-4 6.500z" fill="#e0392c"/><path d="M2.200 5.500L6 12.200a4.500 4.500 0 0 0 5 2L9.500 19A9 9 0 0 1 2.200 5.500z" fill="#2ea14f"/><circle cx="10" cy="10" r="4.200" fill="#fff"/><circle cx="10" cy="10" r="3.300" fill="#3b7de0"/></svg></button>
      <button aria-label="Nodes"><svg viewBox="0 0 20 20"><rect x="0" y="0" width="20" height="20" fill="#e2761b"/><path d="M10 6v4M5 14l5-4 5 4" stroke="#fff" stroke-width="1.500" fill="none"/><path d="M8 3h4v4H8zM3 12h4v4H3zM13 12h4v4h-4z" fill="#fff"/></svg></button>
      <button aria-label="Catia"><svg viewBox="0 0 20 20"><rect x="1" y="0" width="18" height="20" fill="#b8231a"/><path d="M14 4Q6 4 6 10t5 6l-1-5h4v6" fill="none" stroke="#f6b42a" stroke-width="2.400"/></svg></button>
      <button aria-label="Tool"><svg viewBox="0 0 20 20"><path d="M9 17V6l4-4v15z" fill="#111"/><path d="M8 18h7M12.500 2v15M9 7l3.500-5M9 7v8l3-3" stroke="#b8832c" stroke-width="1.200" fill="none"/></svg></button>
      <button aria-label="Signal"><svg viewBox="0 0 20 20"><rect width="20" height="20" fill="#6fae2e"/><path d="M5 16v-3M8.500 16v-5M12 16V8M15.500 16V4" stroke="#fff" stroke-width="2.200"/></svg></button>
      <button class="run" aria-label="Workbench"><span class="wb">WB</span></button>
      <button class="run cur" aria-label="DesignModeler"><span class="dm">DM</span></button>
    </div>
    <div class="tray">
      <svg width="22" height="20" viewBox="0 0 22 20"><path d="M6 1a7 7 0 0 0 8 10 7 7 0 1 1-8-10z" fill="#f4b92e"/><path d="M5 18a4 4 0 0 1 1-8 5 5 0 0 1 9 0 4 4 0 0 1 2 8z" fill="#dfe6ec"/></svg>
      <span class="temp">29°C</span>
      <span class="icons">
        <svg viewBox="0 0 14 14"><path d="M2 9l5-5 5 5" fill="none" stroke="#fff" stroke-width="1.300"/></svg>
        <svg viewBox="0 0 14 14"><path d="M4 3h6v8H4zM5 1h4M5 13h4" fill="none" stroke="#fff"/><circle cx="7" cy="7" r="1.500" fill="none" stroke="#fff"/></svg>
        <svg viewBox="0 0 14 14"><path d="M5 1h4v8H5z" fill="#fff"/><path d="M3 7q1 4 4 4t4-4M7 11v3" fill="none" stroke="#fff"/></svg>
        <svg viewBox="0 0 14 14"><path d="M1 4h10v6H1zM12 6v2" fill="none" stroke="#fff" stroke-width="1.300"/><path d="M2 5h5v4H2z" fill="#fff"/></svg>
        <svg viewBox="0 0 14 14"><path d="M1 7Q5 2 12 2M3 10Q6 5 12 5.500M6 12q2-4 6-3.500" fill="none" stroke="#ddd" stroke-width="1.300"/><circle cx="11" cy="12" r="1.300" fill="#fff"/></svg>
        <svg viewBox="0 0 14 14"><path d="M1 5h2l3-3v10L3 9H1z" fill="none" stroke="#fff"/><path d="M8 5q1.500 2 0 4M10 3.500q2.500 3.500 0 7M12 2q3 5 0 10" fill="none" stroke="#fff"/></svg>
      </span>
      <span class="lang">ENG</span>
      <span class="clock"><span>20:57</span><span>25-08-2022</span></span>
      <span class="notif"><svg width="18" height="20" viewBox="0 0 18 20"><path d="M1 2h13v11H7l-3 3v-3H1z" fill="#fff"/><path d="M3 5h9M3 8h9M3 10.500h5" stroke="#234"/><circle cx="13" cy="14" r="5" fill="#1b2a42" stroke="#dde" stroke-width=".8"/></svg><b>1</b></span>
    </div>
  </footer>
</div>
</body>
</html>
```

FILE: styles.css
```css
:root { --blue: #1184c7; --ink: #3c3c3c; }
* { box-sizing: border-box; }
body { margin: 0; font: 9px/12px "Open Sans", "Noto Sans", sans-serif; color: var(--ink); }
button, input, select { font: inherit; color: inherit; margin: 0; }
h1, h2, h3, p, ul, ol { margin: 0; padding: 0; font-size: 9px; font-weight: 400; list-style: none; }
.sprite { display: none; }
button { border: 0; background: none; padding: 0; white-space: nowrap; }
.plain { display: flex; align-items: center; }
.app { height: 100vh; min-height: 720px; display: flex; flex-direction: column; background: #eeeff2; overflow: hidden; }

.caret { flex: none; display: inline-block; width: 5px; height: 3px; background: currentColor; clip-path: polygon(0 0, 100% 0, 50% 100%); }
.caret.wide { width: 7px; height: 4px; }
.caret.dim { color: #888; }
.caret.tight { margin-left: 1px; color: #777; }
.caret.low { align-self: flex-end; margin-bottom: 5px; color: #222; }
.caret.upw { width: 7px; height: 4px; clip-path: polygon(50% 0, 100% 100%, 0 100%); margin-right: 5px; }

/* Title bar and tabs */
.titlebar { display: grid; grid-template-columns: 1fr auto 1fr; height: 22px; border-top: 1px solid #d8d8dc; }
.titlebar h1 { line-height: 22px; color: #666; }
.quick { display: flex; align-items: center; }
.appicon { width: 14px; height: 14px; margin: 0 10px 4px 7px; }
.quick .plain { margin-bottom: 4px; }
.quick .caret { margin: 0 49px 4px 4px; width: 6px; }
.context { width: 49px; height: 22px; line-height: 20px; margin-top: -1px; text-align: center; background: #d8e3f4; border-top: 3px solid #2f5a94; color: #6a8ab8; }
.winbtns { display: flex; justify-content: flex-end; gap: 18px; padding-right: 10px; color: #111; }
.tabs { display: flex; height: 20px; line-height: 20px; }
.tab { text-align: center; }
.tab.file { width: 46px; background: var(--blue); color: #fff; }
.tab.home { width: 57px; padding-left: 3px; }
.tab.on { width: 49px; background: #fcfcfc; }
.tab.disp { width: 56px; }
.tab.sel { width: 60px; }
.tab.auto { width: 78px; }
.launch { margin-left: auto; display: flex; align-items: center; gap: 6px; padding-right: 1px; }
.launch input { width: 133px; height: 16px; border: 1px solid #dcdde0; background: #fff; padding: 0 3px; }
::placeholder { color: #999; opacity: 1; }
.help { width: 12px; height: 12px; line-height: 12px; border-radius: 6px; background: #4a90d8; color: #fff; text-align: center; }
.launch .tight { margin-left: -5px; color: #333; }

/* Ribbon */
.ribbon { display: grid; grid-template-columns: 73fr 44fr 293fr 315fr 342fr 143fr 37fr 33fr; height: 71px; background: #fcfcfc; border-bottom: 1px solid #d8d9dc; }
.group { padding-top: 3px; min-width: 0; border-right: 1px solid transparent; border-image: linear-gradient(transparent 5px, #dcdcdc 5px, #dcdcdc 65px, transparent 65px) 1; }
.group h2 { text-align: center; line-height: 13px; }
.group small { font-size: 5px; }
.body { display: grid; height: 51px; white-space: nowrap; }
.b-outline { grid-template-columns: 52fr 14fr; padding: 0 5px 0 3px; }
.b-insert { grid-template-columns: 47fr 100fr 67fr 79fr; }
.b-display { grid-template-columns: 122fr 44fr 44fr 38fr 67fr; }
.b-vector { grid-template-columns: 45fr 78fr 92fr 79fr 48fr; }
.b-iso { grid-template-columns: 50fr 86fr; padding-left: 7px; }
.body > * { min-width: 0; }
.big { display: flex; flex-direction: column; align-items: center; padding-top: 3px; }
.big svg { flex: none; margin-bottom: 3px; }
.big.views svg { margin: 4px 0 11px; }
.big .caret { margin-top: 3px; width: 6px; }
.side { display: flex; flex-direction: column; align-items: center; padding-top: 9px; gap: 13px; }
.red { color: #d22d3c; }
.col { display: grid; grid-auto-rows: 17px; row-gap: 1px; align-content: start; justify-items: start; }
.item { display: flex; align-items: center; height: 17px; }
.item svg { width: 13px; height: 12px; flex: none; }
.off, .off button { color: #aaa; }
.ruled { border-left: 1px solid #e0e0e0; padding-left: 4px; }
.combos { padding-left: 5px; justify-items: stretch; }
.combo { position: relative; display: block; background: #fff; border: 1px solid #d0d2d6; }
.combo select { appearance: none; display: block; width: 100%; height: 100%; border: 0; background: none; padding: 0 2px; line-height: 15px; }
.combo::after { content: ""; position: absolute; right: 3px; top: calc(50% - 1px); width: 6px; height: 3px; background: #666; clip-path: polygon(0 0, 100% 0, 50% 100%); }
input[type="checkbox"] { appearance: none; flex: none; width: 10px; height: 10px; border: 1px solid #ccc; background: #fff; }
input[type="checkbox"]:checked::after { content: ""; display: block; width: 5px; height: 3px; margin: 1px; border: solid #222; border-width: 0 0 1px 1px; transform: rotate(-45deg); }
.tick { display: flex; align-items: center; gap: 5px; padding-left: 3px; }
input[type="range"] { appearance: none; width: 70px; height: 15px; background: linear-gradient(#aaa, #aaa) center / 100% 2px no-repeat; }
input[type="range"]::-webkit-slider-thumb { appearance: none; width: 3px; height: 9px; background: #888; }
.isoval { width: 70px; height: 16px; border: 2px solid #d8dade; background: #ececee; padding: 0 2px; }
.b-iso input[type="range"] { margin-left: 4px; }

/* Work area */
.work { flex: 1; min-height: 0; display: flex; padding-top: 2px; }
.left { width: 241px; flex: none; display: flex; flex-direction: column; gap: 3px; }
.right { flex: 1; min-width: 0; display: flex; flex-direction: column; margin-left: 2px; }
.phead { display: flex; align-items: center; height: 16px; padding: 0 7px 0 4px; flex: none; color: #222; }
.phead h3 { color: #666; white-space: nowrap; }
.phead.blue, .phead.blue h3 { background: var(--blue); color: #fff; }
.grow { flex: 1; }
.tex { height: 6px; margin: 0 5px; background: radial-gradient(circle, #d4d5d8 1px, transparent 1px) 0 0 / 3px 3px; }
.pbtns { display: flex; align-items: center; gap: 5px; }
.outline { flex: 1; display: flex; flex-direction: column; min-height: 0; }
.filter { display: flex; align-items: center; height: 23px; flex: none; }
.grip { flex: none; width: 5px; height: 13px; background: radial-gradient(circle, #c4c6ca 1px, transparent 1px) 0 0 / 3px 3px; }
.filter .grip { margin: 0 7px; }
.filter .combo { width: 82px; height: 18px; }
.filter .search { width: 75px; height: 18px; border: 1px solid #dcdde0; background: #fff; padding: 0 2px; margin-right: 5px; }
.filter .low { margin-left: 5px; }

.tree { flex: 1; background: #fff; display: grid; grid-template-rows: repeat(21, minmax(0, 1fr)); padding: 0 0 13px; }
.tree li { display: flex; align-items: center; font-family: "Liberation Sans", Arial, sans-serif; line-height: 12px; white-space: nowrap; color: #333; }
.tree .b { font-weight: 700; }
.c { flex: none; width: 22px; align-self: stretch; }
.c:nth-of-type(3) { width: 23px; }
.c.v { background: linear-gradient(#ccc, #ccc) 10px 0 / 1px 100% no-repeat; }
.c.l { background: linear-gradient(#ccc, #ccc) 10px 0 / 1px 50% no-repeat, linear-gradient(#ccc, #ccc) 11px 50% / 100% 1px no-repeat; }
.c.h { background: linear-gradient(#ccc, #ccc) 10px 0 / 1px 100% no-repeat, linear-gradient(#ccc, #ccc) 11px 50% / 100% 1px no-repeat; }
.c.x { display: flex; align-items: center; padding-left: 7px; }
.c.x::before { content: ""; width: 8px; height: 8px; border: 1px solid #999; background: linear-gradient(#444, #444) center / 4px 1px no-repeat #fff; }
.c.x.plus::before { background: linear-gradient(#444, #444) center / 4px 1px no-repeat, linear-gradient(#444, #444) center / 1px 4px no-repeat #fff; }
.c.x::after { content: ""; width: 6px; height: 1px; background: #ccc; margin-left: 1px; }
.ic { position: relative; flex: none; width: 24px; padding-left: 8px; display: flex; align-items: center; }
.ic svg { width: 13px; height: 12px; }
.ic.k::before { content: ""; position: absolute; left: 1px; bottom: 1px; width: 6px; height: 3px; border: solid #35ad35; border-width: 0 0 2px 1px; transform: rotate(-50deg); }
.ic.green { --fill: #3fd04c; }
mark { background: #1c73c8; color: #fff; outline: 1px solid #446; }

.details { flex: none; height: 220px; display: flex; flex-direction: column; }
.props { display: flex; flex: 1; min-height: 0; overflow: hidden; background: #fff; align-items: flex-start; }
.props table { width: 226px; table-layout: fixed; border-collapse: collapse; }
.gut { width: 11px; }
.key { width: 101px; }
.props td, .props th { height: 15px; padding: 0 2px; border: 1px solid #b8b8b8; text-align: left; white-space: nowrap; overflow: hidden; line-height: 12px; }
.props td:first-child { border-width: 0 1px 0 0; padding: 0; }
.props th { color: #222; }
.props .ro { background: #e6e5e2; }
.props label { display: flex; align-items: center; gap: 4px; }
.props input { border-color: #ddd; }
.exp { display: block; width: 7px; height: 7px; margin-left: 2px; border: 1px solid #bbb; background: linear-gradient(#888, #888) center / 3px 1px no-repeat; }
.scroll { align-self: stretch; flex: 1; display: flex; flex-direction: column; justify-content: space-between; align-items: center; padding: 4px 0; background: #f0f0f0; }
.scroll i { width: 12px; height: 121px; background: #cdcdcd; margin-bottom: auto; margin-top: 4px; }

/* Graphics toolbar */
.toolbar { display: flex; align-items: center; height: 21px; flex: none; padding: 0 0 1px 8px; font-size: 10px; }
.toolbar .grip { margin-right: 5px; }
.tb { flex: none; width: 18px; height: 18px; display: flex; align-items: center; justify-content: center; border: 1px solid transparent; }
.tb svg { width: 13px; height: 13px; flex: none; }
.tb.act { border-color: #72aadc; background: #dbe8f5; }
.tb.rot { width: 27px; }
.tb.wider { width: 24px; }
.faded { opacity: .6; }
.bl { --fill: #a9cdec; --line: #456; }
.gr { --fill: #6bbf75; --line: #456; }
.bg { --fill: #8fd39c; --line: #357; }
.gy { --fill: #bbb; }
.sep { flex: none; width: 1px; height: 12px; margin: 0 2px; background: #d8d8dc; }
.toolbar .sep { margin: 0 3px 0 2px; }
.tbt { display: flex; align-items: center; }
.tbt svg { width: 13px; height: 13px; margin-right: 1px; }
.lbl { white-space: nowrap; }
.toolbar .lbl { margin-left: 4px; }
.mode { margin: 0 7px 0 5px; }
.toolbar .empty { margin: 0 12px 0 9px; }
.sby { margin-left: 10px; }
.con { margin: 0 3px 0 10px; }

/* Graphics window */
.viewport { position: relative; flex: 1; min-height: 0; display: flex; justify-content: center; font-family: "Noto Sans", "Open Sans", sans-serif; color: #1c2440; background: linear-gradient(#708eda, #9fb2e6 33%, #c6d2ef 60%, #e6edf8 85%, #fdfeff); border-top: 1px solid #7ea0dc; }
.notes { position: absolute; left: 13px; top: 11px; display: grid; grid-template-rows: repeat(7, 1fr); height: 88px; white-space: nowrap; }
.legend { position: absolute; left: 13px; top: 109px; display: flex; gap: 7px; }
.legend li { height: 14px; line-height: 14px; white-space: nowrap; }
.swatches { margin-top: 7px; border: 1px solid #222; width: 13px; height: 128px; display: grid; grid-template-rows: repeat(9, 1fr); }
.swatches i { border-bottom: 1px solid rgba(0, 0, 0, .5); }
.s1 { background: #e60000; } .s2 { background: #f6b100; } .s3 { background: #ffff00; }
.s4 { background: #a8f000; } .s5 { background: #00f000; } .s6 { background: #12eda4; }
.s7 { background: #10f4f4; } .s8 { background: #12b4f0; } .s9 { background: #0000e8; }
.scene { flex: none; margin-top: 63px; }
.rule text { font-size: 9px; text-anchor: middle; fill: #222; }
.brand { position: absolute; right: 20px; top: 19px; color: #fff; text-align: right; }
.brand > b { display: block; font: 700 21px/24px "Open Sans", "Noto Sans", sans-serif; }
.brand span { display: block; font: 12px/14px "Open Sans", "Noto Sans", sans-serif; }
.triad { position: absolute; right: 4px; bottom: 38px; font-size: 10px; }

/* Bottom panels */
.bottom { flex: none; display: grid; grid-template-columns: 547fr 488fr; gap: 2px; height: 157px; margin-top: 2px; }
.graph { position: relative; display: flex; flex-direction: column; min-width: 0; }
.anim { display: flex; align-items: center; height: 23px; padding-left: 8px; flex: none; font-size: 10px; }
.anim .lbl { margin: 0 3px 0 9px; }
.anim .combo { height: 18px; }
.frames { width: 83px; }
.secs { width: 80px; margin-right: 4px; }
.play { background: #dfe9f2; }
.more { margin-left: auto; display: flex; flex-direction: column; align-items: center; gap: 4px; padding-right: 4px; }
.plot { display: block; width: 100%; flex: 1; min-height: 0; background: #fff; }
.axis { font: 700 10px "Open Sans", sans-serif; text-anchor: middle; fill: #222; }
.ptabs { display: flex; height: 16px; flex: none; }
.ptabs .plain { padding: 0 5px; }
.ptabs .cur { color: #2b8fcb; background: #f8fafc; }
.cursor { position: absolute; left: 100px; top: 32px; }
.tabular { display: flex; flex-direction: column; min-width: 0; }
.gridwrap { flex: 1; background: #9f9f9f; }
.data { border-collapse: collapse; table-layout: fixed; width: 304px; background: #f4f4f2; }
.data th, .data td { border: 1px solid #aaa; height: 14px; padding: 0 3px; font-weight: 400; text-align: left; white-space: nowrap; overflow: hidden; line-height: 12px; }
.data td { background: #e7e6e2; border-color: #d4d4d0; }
.data td:first-child { background: #f4f4f2; }
.data .n { width: 11px; }
.data .t { width: 40px; padding: 0 1px; }
.data .m { width: 86px; }
.data .a { width: 80px; }
.data .m, .data .a { padding: 0 2px; }
.data label { display: flex; align-items: center; gap: 4px; }
.data input[type="checkbox"] { border-color: #888 #eee #eee #888; }
.data input[type="checkbox"]:checked::after { width: 6px; border-color: #000; border-width: 0 0 2px 2px; margin: 1px; }
.cr { color: #c8304a; } .cg { color: #35a845; } .cb { color: #4434c0; }

/* Status bar */
.status { flex: none; display: flex; align-items: center; justify-content: flex-end; gap: 10px; height: 18px; padding-right: 7px; background: var(--blue); color: #fff; font-family: "Noto Sans", "Open Sans", sans-serif; white-space: nowrap; }
.status span { display: flex; align-items: center; }
.msg svg { margin-right: 3px; }
.nosel { margin: 0 10px 0 5px; }

/* Taskbar */
.taskbar { flex: none; display: flex; height: 33px; background: linear-gradient(90deg, #20363b, #1f373d 55%, #1b2742 80%, #1a2340); color: #fff; font-size: 10px; }
.start { width: 40px; display: flex; align-items: center; justify-content: center; }
.find { width: 286px; flex: none; display: flex; align-items: center; padding-left: 10px; background: #f2f2f3; color: #333; }
.find input { flex: 1; min-width: 0; border: 0; background: none; font-size: 12px; padding: 0 0 0 9px; }
.find ::placeholder { color: #444; }
.art { flex: none; margin-right: 2px; }
.apps { display: flex; }
.apps button { width: 41px; display: flex; align-items: center; justify-content: center; border-bottom: 2px solid transparent; }
.apps svg { width: 20px; height: 20px; }
.apps .run { border-bottom-color: #7db4de; }
.apps .cur { background: #485a7c; }
.wb, .dm { width: 20px; height: 20px; line-height: 20px; font-weight: 700; font-size: 10px; background: #8c8e90; color: #fff; }
.dm { background: #1a1ac0; }
.tray { margin-left: auto; display: flex; align-items: center; padding-right: 14px; font-size: 11px; white-space: nowrap; }
.temp { margin: 0 12px 0 4px; }
.icons { display: flex; gap: 6px; }
.icons svg { width: 14px; height: 14px; }
.lang { font-size: 10px; margin: 0 8px 0 8px; }
.clock { display: flex; flex-direction: column; align-items: center; font-size: 10px; line-height: 15px; }
.notif { position: relative; display: flex; margin-left: 14px; }
.notif b { position: absolute; right: 3px; bottom: 0; font-size: 7px; font-weight: 400; line-height: 12px; }
```
